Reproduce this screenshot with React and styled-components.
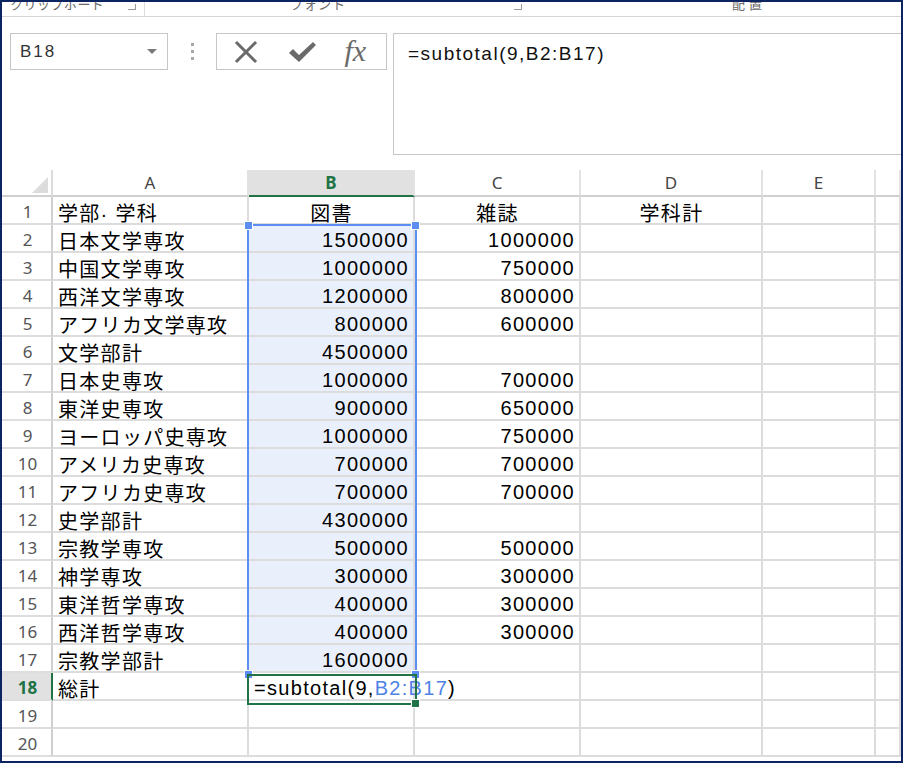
import React from "react";
import styled, { createGlobalStyle } from "styled-components";

const GlobalStyle = createGlobalStyle`
  html, body {
    margin: 0;
    padding: 0;
    background: #ffffff;
  }
`;

const Frame = styled.div`
  width: 903px;
  height: 763px;
  box-sizing: border-box;
  border: 2px solid #0c2461;
  overflow: hidden;
  display: flex;
  flex-direction: column;
  background: #ffffff;
  font-family: "Noto Sans", "Noto Sans CJK JP", sans-serif;
`;

const Ribbon = styled.div`
  height: 14px;
  flex-shrink: 0;
  display: flex;
  border-bottom: 1px solid #d6d6d6;
  overflow: hidden;
`;

const Group = styled.div`
  width: ${(p) => p.$w};
  flex: ${(p) => (p.$w ? "none" : "1")};
  display: flex;
  align-items: flex-start;
  justify-content: ${(p) => p.$justify || "center"};
  padding: 0 ${(p) => p.$pad || "0px"};
  box-sizing: border-box;
  border-right: ${(p) => (p.$sep ? "1px solid #dcdcdc" : "none")};
  gap: 8px;
`;

const GroupLabel = styled.span`
  font-family: "Noto Sans CJK JP", sans-serif;
  font-size: 13px;
  line-height: 16px;
  margin-top: -6px;
  margin-right: ${(p) => p.$mr || "0px"};
  color: #6a6a6a;
  letter-spacing: ${(p) => p.$ls || "0.5px"};
  white-space: nowrap;
`;

const Launcher = styled.span`
  width: 7px;
  height: 5px;
  margin-top: 2px;
  border-right: 1px solid #9a9a9a;
  border-bottom: 1px solid #9a9a9a;
`;

const FormulaRow = styled.div`
  display: flex;
  align-items: flex-start;
  padding: 16px 0 0 8px;
  height: 138px;
  box-sizing: border-box;
  flex-shrink: 0;
`;

const NameBox = styled.div`
  width: 158px;
  height: 37px;
  box-sizing: border-box;
  border: 1px solid #c6c6c6;
  display: flex;
  align-items: center;
  justify-content: space-between;
  padding: 0 10px 0 9px;
  font-family: "Liberation Sans", sans-serif;
  font-size: 17px;
  letter-spacing: 2px;
  color: #333333;
`;

const Caret = styled.span`
  width: 0;
  height: 0;
  border-left: 5px solid transparent;
  border-right: 5px solid transparent;
  border-top: 5px solid #7a7a7a;
`;

const Dots = styled.div`
  width: 48px;
  height: 37px;
  display: flex;
  flex-direction: column;
  align-items: center;
  justify-content: center;
  gap: 4px;
  span {
    width: 3px;
    height: 3px;
    background: #a8a8a8;
  }
`;

const FxBox = styled.div`
  width: 171px;
  height: 37px;
  box-sizing: border-box;
  border: 1px solid #c6c6c6;
  display: flex;
  align-items: center;
  justify-content: space-around;
  padding: 0 6px 0 2px;
`;

const Fx = styled.span`
  font-family: "Liberation Serif", serif;
  font-style: italic;
  font-size: 30px;
  color: #6a6a6a;
  line-height: 1;
  margin-top: -2px;
`;

const FormulaBox = styled.div`
  flex: 1;
  margin-left: 6px;
  height: 122px;
  box-sizing: border-box;
  border: 1px solid #c6c6c6;
  border-right: none;
  padding: 9px 0 0 14px;
  font-family: "Liberation Sans", sans-serif;
  font-size: 19px;
  letter-spacing: 1.5px;
  color: #111111;
`;

const Sheet = styled.div`
  position: relative;
  margin-top: 15px;
  display: grid;
  grid-template-columns: 51px 196px 166px 166px 182px 113px 1fr;
  grid-template-rows: 27px;
  grid-auto-rows: 28px;
`;

const Corner = styled.div`
  border-right: 2px solid #dcdcdc;
  border-bottom: 2px solid #d0d0d0;
  box-sizing: border-box;
  display: flex;
  align-items: flex-end;
  justify-content: flex-end;
  padding: 0 3px 2px 0;
`;

const Triangle = styled.span`
  width: 0;
  height: 0;
  border-left: 16px solid transparent;
  border-bottom: 16px solid #dcdcdc;
`;

const ColHead = styled.div`
  box-sizing: border-box;
  border-right: 2px solid #e2e2e2;
  border-bottom: 2px solid ${(p) => (p.$active ? "#217346" : "#d0d0d0")};
  background: ${(p) => (p.$active ? "#e1e1e1" : "#ffffff")};
  color: ${(p) => (p.$active ? "#217346" : "#444444")};
  font-weight: ${(p) => (p.$active ? 700 : 400)};
  font-size: 17px;
  display: flex;
  align-items: center;
  justify-content: center;
`;

const RowHead = styled.div`
  box-sizing: border-box;
  border-right: 2px solid ${(p) => (p.$active ? "#217346" : "#d0d0d0")};
  border-bottom: 2px solid #dedede;
  background: ${(p) => (p.$active ? "#e1e1e1" : "#ffffff")};
  color: ${(p) => (p.$active ? "#217346" : "#555555")};
  font-weight: ${(p) => (p.$active ? 700 : 400)};
  font-size: 17px;
  display: flex;
  align-items: center;
  justify-content: center;
  padding: 3px 0 0 2px;
`;

const Cell = styled.div`
  box-sizing: border-box;
  border-right: 2px solid #dcdcdc;
  border-bottom: 2px solid #dcdcdc;
  background: ${(p) => (p.$selected ? "#eaf0fb" : "#ffffff")};
  display: flex;
  align-items: center;
  justify-content: ${(p) =>
    p.$align === "right" ? "flex-end" : p.$align === "center" ? "center" : "flex-start"};
  padding: 4px 4px 0 5px;
  font-family: "Liberation Sans", "Noto Sans CJK JP", sans-serif;
  font-size: 20px;
  letter-spacing: 1.3px;
  color: #000000;
  white-space: nowrap;
  overflow: visible;
  position: relative;
  z-index: ${(p) => (p.$over ? 2 : 0)};
`;

const Ref = styled.span`
  color: #4f82e6;
`;

const Range = styled.div`
  position: absolute;
  left: 245px;
  top: ${(p) => p.$top}px;
  width: 170px;
  height: ${(p) => p.$h}px;
  box-sizing: border-box;
  border: 2px solid ${(p) => p.$color};
  pointer-events: none;
  z-index: 3;
`;

const Handle = styled.span`
  position: absolute;
  width: 7px;
  height: 7px;
  background: ${(p) => p.$color};
  border: 1px solid #ffffff;
  left: ${(p) => (p.$right ? "auto" : "-5px")};
  right: ${(p) => (p.$right ? "-5px" : "auto")};
  top: ${(p) => (p.$bottom ? "auto" : "-5px")};
  bottom: ${(p) => (p.$bottom ? "-5px" : "auto")};
`;

const CrossIcon = () => (
  <svg width="26" height="24" viewBox="0 0 26 24">
    <path d="M4 3 L22 21 M22 3 L4 21" stroke="#6a6a6a" strokeWidth="3" strokeLinecap="square" fill="none" />
  </svg>
);

const CheckIcon = () => (
  <svg width="30" height="26" viewBox="0 0 30 26">
    <path d="M2 14 L6 10 L12 16 L26 3 L29 6 L12 23 Z" fill="#6a6a6a" />
  </svg>
);

const data = [
  ["学部· 学科", "図書", "雑誌", "学科計"],
  ["日本文学専攻", "1500000", "1000000"],
  ["中国文学専攻", "1000000", "750000"],
  ["西洋文学専攻", "1200000", "800000"],
  ["アフリカ文学専攻", "800000", "600000"],
  ["文学部計", "4500000", ""],
  ["日本史専攻", "1000000", "700000"],
  ["東洋史専攻", "900000", "650000"],
  ["ヨーロッパ史専攻", "1000000", "750000"],
  ["アメリカ史専攻", "700000", "700000"],
  ["アフリカ史専攻", "700000", "700000"],
  ["史学部計", "4300000", ""],
  ["宗教学専攻", "500000", "500000"],
  ["神学専攻", "300000", "300000"],
  ["東洋哲学専攻", "400000", "300000"],
  ["西洋哲学専攻", "400000", "300000"],
  ["宗教学部計", "1600000", ""],
  ["総計", "formula", ""],
  ["", "", ""],
  ["", "", ""],
];

const cols = ["A", "B", "C", "D", "E", ""];

const App = () => {
  return (
    <>
      <GlobalStyle />
      <Frame>
        <Ribbon>
          <Group $w="143px" $justify="space-between" $pad="8px" $sep>
            <GroupLabel>クリップボード</GroupLabel>
            <Launcher />
          </Group>
          <Group $w="387px" $justify="flex-end" $pad="10px">
            <GroupLabel $mr="160px" $ls="1px">フォント</GroupLabel>
            <Launcher />
          </Group>
          <Group $justify="flex-start" $pad="200px">
            <GroupLabel $ls="4px">配置</GroupLabel>
          </Group>
        </Ribbon>

        <FormulaRow>
          <NameBox>
            B18
            <Caret />
          </NameBox>
          <Dots>
            <span />
            <span />
            <span />
          </Dots>
          <FxBox>
            <CrossIcon />
            <CheckIcon />
            <Fx>fx</Fx>
          </FxBox>
          <FormulaBox>=subtotal(9,B2:B17)</FormulaBox>
        </FormulaRow>

        <Sheet>
          <Corner>
            <Triangle />
          </Corner>
          {cols.map((c, i) => (
            <ColHead key={i} $active={c === "B"}>
              {c}
            </ColHead>
          ))}
          {data.map((row, r) => {
            const n = r + 1;
            return (
              <React.Fragment key={n}>
                <RowHead $active={n === 18}>{n}</RowHead>
                <Cell>{row[0]}</Cell>
                {row[1] === "formula" ? (
                  <Cell $over>
                    =subtotal(9,<Ref>B2:B17</Ref>)
                  </Cell>
                ) : (
                  <Cell $align={n === 1 ? "center" : "right"} $selected={n >= 2 && n <= 17}>
                    {row[1]}
                  </Cell>
                )}
                <Cell $align={n === 1 ? "center" : "right"}>{row[2]}</Cell>
                <Cell $align="center">{row[3] || ""}</Cell>
                <Cell />
                <Cell />
              </React.Fragment>
            );
          })}
          <Range $top={54} $h={452} $color="#5b8ef0">
            <Handle $color="#5b8ef0" />
            <Handle $color="#5b8ef0" $right />
            <Handle $color="#5b8ef0" $bottom />
            <Handle $color="#5b8ef0" $right $bottom />
          </Range>
          <Range $top={504} $h={31} $color="#217346">
            <Handle $color="#217346" $right $bottom />
          </Range>
        </Sheet>
      </Frame>
    </>
  );
};

export default App;
